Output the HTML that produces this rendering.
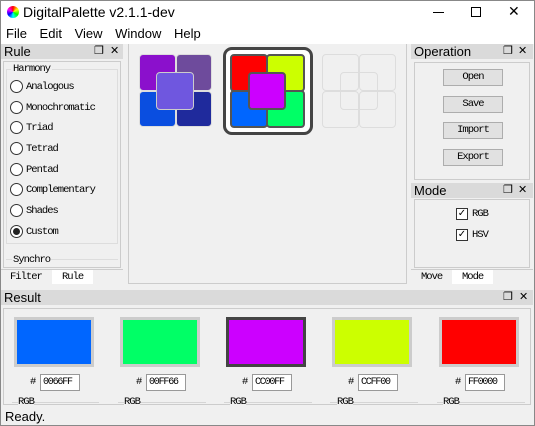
<!DOCTYPE html>
<html><head><meta charset="utf-8"><style>
*{box-sizing:border-box;margin:0;padding:0}
body{width:535px;height:426px;position:relative;background:#f0f0f0;font-family:"Liberation Sans",sans-serif;font-size:12px;color:#000;overflow:hidden}
.a{position:absolute}
.m{font-family:"Liberation Mono",monospace;font-size:10.5px;letter-spacing:-1px}
.hdr{position:absolute;background:#dadada;height:15px;font-size:13px;line-height:15px;padding-left:3px}
.ic{position:absolute;font-size:11px;top:0}
.q{position:absolute;border-radius:4px}
.btn{position:absolute;width:60px;height:17px;left:443px;background:#e1e1e1;border:1px solid #adadad;text-align:center;line-height:15px}
.rad{position:absolute;left:10px;width:13px;height:13px;border:1px solid #333;border-radius:50%;background:#fff}
.rl{position:absolute;left:26px}
.sw{position:absolute;top:317px;width:80px;height:50px;border:3px solid #ccc}
.hx{position:absolute;top:374px;width:40px;height:17px;border:1px solid #999;background:#fff;line-height:15px;padding-left:2px;font-size:10px;letter-spacing:-1.2px}
.hs{position:absolute;top:376px}
.rgb{position:absolute;top:396px}
.gl{position:absolute;top:402px;height:1px;background:#d5d5d5}
</style></head><body>
<div class="a" style="left:0;top:0;width:535px;height:44px;background:#fff"></div>
<div class="a" style="left:7px;top:6px;width:12px;height:12px;border-radius:50%;background:conic-gradient(#f00,#ff0,#0f0,#0ff,#00f,#f0f,#f00)"></div>
<div class="a" style="left:23px;top:4px;font-size:14px">DigitalPalette v2.1.1-dev</div>
<div class="a" style="left:433px;top:5px;width:11px;height:1px;background:#000;top:12px"></div>
<div class="a" style="left:471px;top:7px;width:10px;height:10px;border:1px solid #000"></div>
<div class="a" style="left:508px;top:3px;font-size:14px">✕</div>
<div class="a" style="left:6px;top:26px;font-size:13px;word-spacing:9px">File Edit View Window Help</div>

<div class="hdr" style="left:1px;top:44px;width:122px">Rule<span class="ic" style="left:93px">❐</span><span class="ic" style="left:109px">✕</span></div>
<div class="a" style="left:3px;top:61px;width:118px;height:207px;border:1px solid #ccc"></div>
<div class="a" style="left:6px;top:69px;width:112px;height:175px;border:1px solid #ddd"></div>
<div class="a m" style="left:11px;top:63px;background:#f0f0f0;padding:0 2px">Harmony</div>
<div class="rad" style="top:80px"></div><div class="rl m" style="top:81px">Analogous</div>
<div class="rad" style="top:101px"></div><div class="rl m" style="top:102px">Monochromatic</div>
<div class="rad" style="top:121px"></div><div class="rl m" style="top:122px">Triad</div>
<div class="rad" style="top:142px"></div><div class="rl m" style="top:143px">Tetrad</div>
<div class="rad" style="top:163px"></div><div class="rl m" style="top:164px">Pentad</div>
<div class="rad" style="top:183px"></div><div class="rl m" style="top:184px">Complementary</div>
<div class="rad" style="top:204px"></div><div class="rl m" style="top:205px">Shades</div>
<div class="rad" style="top:225px"><div class="a" style="left:2px;top:2px;width:7px;height:7px;border-radius:50%;background:#222"></div></div><div class="rl m" style="top:226px">Custom</div>
<div class="a" style="left:6px;top:259px;width:112px;height:1px;background:#ddd"></div>
<div class="a m" style="left:12px;top:254px;background:#f0f0f0;padding:0 1px">Synchro</div>
<div class="a" style="left:1px;top:269px;width:122px;height:1px;background:#ccc"></div>
<div class="a m" style="left:10px;top:271px">Filter</div>
<div class="a m" style="left:52px;top:270px;width:41px;height:14px;background:#fff;padding-left:10px;padding-top:1px">Rule</div>

<div class="a" style="left:128px;top:44px;width:279px;height:240px;border:1px solid #ccc;border-top:none"></div>
<div class="q" style="left:139px;top:54px;width:37px;height:37px;background:#8b10cc;border:1px solid #ddd"></div>
<div class="q" style="left:176px;top:54px;width:36px;height:37px;background:#6e4b9c;border:1px solid #ddd"></div>
<div class="q" style="left:139px;top:91px;width:37px;height:36px;background:#0a4ee0;border:1px solid #ddd"></div>
<div class="q" style="left:176px;top:91px;width:36px;height:36px;background:#1f2a9c;border:1px solid #ddd"></div>
<div class="q" style="left:156px;top:72px;width:38px;height:38px;background:#6f57df;border:1px solid #ccc"></div>
<div class="q" style="left:223px;top:47px;width:90px;height:88px;border:3px solid #444;border-radius:9px;background:#fff"></div>
<div class="q" style="left:230px;top:54px;width:38px;height:38px;background:#f00;border:2px solid #555"></div>
<div class="q" style="left:266px;top:54px;width:39px;height:38px;background:#cf0;border:2px solid #555"></div>
<div class="q" style="left:230px;top:90px;width:38px;height:38px;background:#06f;border:2px solid #555"></div>
<div class="q" style="left:266px;top:90px;width:39px;height:38px;background:#0f6;border:2px solid #555"></div>
<div class="q" style="left:248px;top:72px;width:38px;height:38px;background:#c0f;border:2px solid #555"></div>
<div class="q" style="left:322px;top:54px;width:37px;height:37px;border:1px solid #ddd"></div>
<div class="q" style="left:359px;top:54px;width:37px;height:37px;border:1px solid #ddd"></div>
<div class="q" style="left:322px;top:91px;width:37px;height:37px;border:1px solid #ddd"></div>
<div class="q" style="left:359px;top:91px;width:37px;height:37px;border:1px solid #ddd"></div>
<div class="q" style="left:340px;top:72px;width:38px;height:38px;border:1px solid #ddd"></div>

<div class="hdr" style="left:411px;top:44px;width:122px">Operation<span class="ic" style="left:92px">❐</span><span class="ic" style="left:107px">✕</span></div>
<div class="a" style="left:414px;top:62px;width:116px;height:118px;border:1px solid #ccc"></div>
<div class="btn m" style="top:69px">Open</div>
<div class="btn m" style="top:96px">Save</div>
<div class="btn m" style="top:122px">Import</div>
<div class="btn m" style="top:149px">Export</div>
<div class="hdr" style="left:411px;top:183px;width:122px">Mode<span class="ic" style="left:92px">❐</span><span class="ic" style="left:107px">✕</span></div>
<div class="a" style="left:414px;top:199px;width:116px;height:69px;border:1px solid #ccc"></div>
<div class="a" style="left:456px;top:208px;width:12px;height:12px;border:1px solid #333;background:#fff;font-size:10px;line-height:10px;text-align:center">✓</div>
<div class="a m" style="left:472px;top:208px">RGB</div>
<div class="a" style="left:456px;top:229px;width:12px;height:12px;border:1px solid #333;background:#fff;font-size:10px;line-height:10px;text-align:center">✓</div>
<div class="a m" style="left:472px;top:229px">HSV</div>
<div class="a" style="left:411px;top:269px;width:122px;height:1px;background:#ccc"></div>
<div class="a m" style="left:421px;top:271px">Move</div>
<div class="a m" style="left:452px;top:270px;width:41px;height:14px;background:#fff;padding-left:10px;padding-top:1px">Mode</div>

<div class="hdr" style="left:1px;top:290px;width:532px">Result<span class="ic" style="left:502px">❐</span><span class="ic" style="left:518px">✕</span></div>
<div class="a" style="left:3px;top:308px;width:528px;height:97px;border:1px solid #ccc"></div>
<div class="sw" style="left:14px;background:#06f"></div>
<div class="sw" style="left:120px;background:#0f6"></div>
<div class="sw" style="left:226px;background:#c0f;border-color:#444"></div>
<div class="sw" style="left:332px;background:#cf0"></div>
<div class="sw" style="left:439px;background:#f00"></div>
<div class="hs m" style="left:30px">#</div><div class="hx m" style="left:40px">0066FF</div>
<div class="hs m" style="left:136px">#</div><div class="hx m" style="left:146px">00FF66</div>
<div class="hs m" style="left:242px">#</div><div class="hx m" style="left:252px">CC00FF</div>
<div class="hs m" style="left:348px">#</div><div class="hx m" style="left:358px">CCFF00</div>
<div class="hs m" style="left:455px">#</div><div class="hx m" style="left:465px">FF0000</div>
<div class="gl" style="left:12px;width:87px"></div><div class="gl" style="left:118px;width:88px"></div><div class="gl" style="left:224px;width:88px"></div><div class="gl" style="left:330px;width:88px"></div><div class="gl" style="left:437px;width:88px"></div>
<div class="rgb m" style="left:18px;background:#f0f0f0">RGB</div>
<div class="rgb m" style="left:124px;background:#f0f0f0">RGB</div>
<div class="rgb m" style="left:230px;background:#f0f0f0">RGB</div>
<div class="rgb m" style="left:337px;background:#f0f0f0">RGB</div>
<div class="rgb m" style="left:443px;background:#f0f0f0">RGB</div>
<div class="a" style="left:0;top:405px;width:535px;height:21px;background:#f0f0f0"></div>
<div class="a" style="left:5px;top:409px;font-size:13px">Ready.</div>
<div class="a" style="left:0;top:0;width:535px;height:426px;border:1px solid #888;pointer-events:none"></div>
</body></html>
